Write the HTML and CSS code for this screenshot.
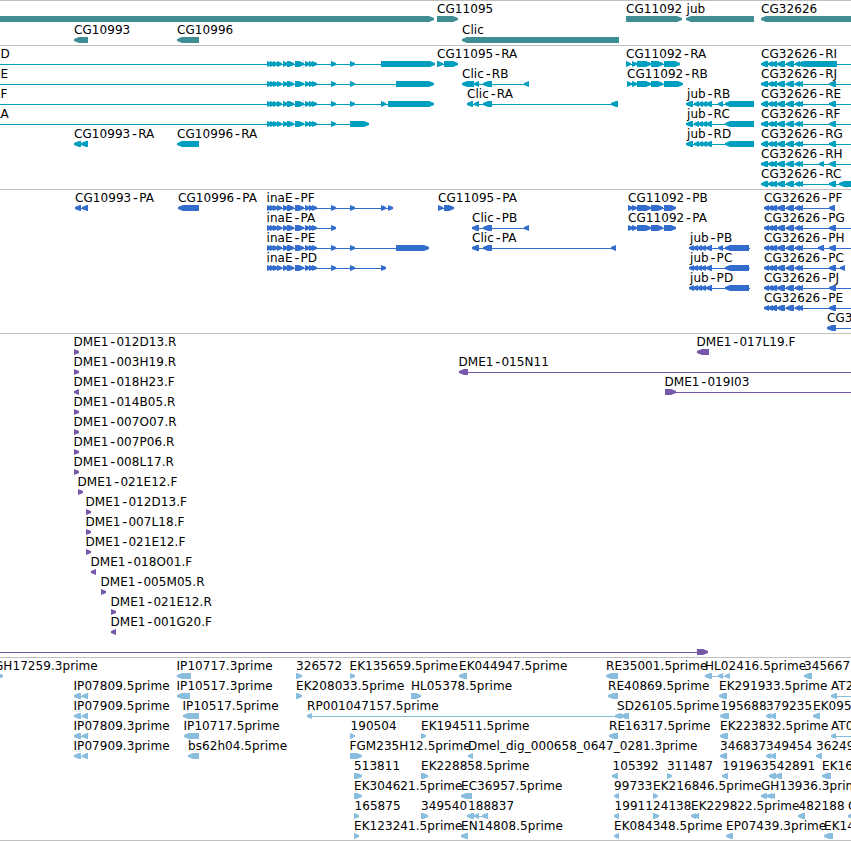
FILE: index.html
```html
<!DOCTYPE html>
<html lang="en">
<head>
    <meta charset="UTF-8">
    <title>Genome Browser</title>
    <link rel="stylesheet" href="styles.css">
</head>
<body>
    <div class="browser">
        <svg class="track genes" id="genes"></svg>
        <svg class="track transcripts" id="transcripts"></svg>
        <svg class="track proteins" id="proteins"></svg>
        <svg class="track bacs" id="bacs"></svg>
        <svg class="track ests" id="ests"></svg>
    </div>
    <script src="tracks.js"></script>
</body>
</html>
```
FILE: styles.css
```css
* {
    margin: 0;
    padding: 0;
    box-sizing: border-box;
}
body {
    background-color: #ffffff;
    overflow: hidden;
}
.browser {
    width: 851px;
    display: flex;
    flex-direction: column;
    border-bottom: 1px solid #bfbfbf;
}
.track {
    display: block;
    width: 100%;
    border-top: 1px solid #bfbfbf;
    overflow: hidden;
}
.track text {
    font-family: "DejaVu Sans", sans-serif;
    font-size: 12px;
    letter-spacing: 0.06px;
    fill: #000000;
    white-space: pre;
}
/* wider hyphen */
.track .dash {
    font-family: "DejaVu Sans Mono", monospace;
    font-size: 14px;
    letter-spacing: -0.6px;
    baseline-shift: -1px;
}
.genes {
    height: 45px;
    fill: #3f8e93;
}
.transcripts {
    height: 144px;
    fill: #009ebf;
}
.proteins {
    height: 144px;
    fill: #326ccc;
}
.bacs {
    height: 324px;
    fill: #7558a8;
}
.ests {
    height: 183px;
    fill: #88bddd;
}
```
FILE: tracks.js
```js
// feature: [row, label, label x, direction, "start-end ..." blocks, line start, line end]
const inaE = '267-272 270-275 273-278 277-282 283-288 287-294 295-304 305-310 309-314 312-317 331-336';
const cg11092 = '632-637 637-651 651-663';
const cg32626 = '768-773 771-777 777-785 786-794 795-800 798-803';
const jubR = '686-693 694-699 698-703 702-707 706-712';
const jubP = '689-694 693-698 697-702 701-706 706-712';

const genes = [
    [0, '', 0, '>', '0-434'],
    [0, 'CG11095', 437, '>', '437-458'],
    [0, 'CG11092', 626, '>', '626-682'],
    [0, 'jub', 686.5, '<', '686-754'],
    [0, 'CG32626', 761, '<', '761-860'],
    [1, 'CG10993', 74, '<', '74-88'],
    [1, 'CG10996', 177, '<', '177-199'],
    [1, 'Clic', 462, '<', '462-619']
];

const transcripts = [
    [0, 'RD', -8, '>', inaE + ' 350-355 381-435', 0],
    [1, 'RE', -8, '>', inaE + ' 350-355 396-434', 0],
    [2, 'RF', -8, '>', inaE + ' 350-355 381-386 388-434', 0],
    [3, 'RA', -7.5, '>', inaE + ' 350-369', 0],
    [4, 'CG10993-RA', 74, '<', '74-81 81-88'],
    [4, 'CG10996-RA', 177, '<', '177-199'],
    [0, 'CG11095-RA', 437, '>', '437-443 444-458'],
    [1, 'Clic-RB', 462, '<', '462-474 474-479 483-492 524-529'],
    [2, 'Clic-RA', 467, '<', '467-473 474-479 483-492 611-618'],
    [0, 'CG11092-RA', 626, '>', '626-631 ' + cg11092 + ' 664-680'],
    [1, 'CG11092-RB', 627, '>', '627-632 ' + cg11092 + ' 664-683'],
    [2, 'jub-RB', 687, '<', jubR + ' 718-723 725-754'],
    [3, 'jub-RC', 687, '<', jubR + ' 725-754'],
    [4, 'jub-RD', 687, '<', jubR + ' 725-754'],
    [0, 'CG32626-RI', 761, '<', '761-768 ' + cg32626 + ' 799-837', 761, 851],
    [1, 'CG32626-RJ', 761, '<', '761-768 ' + cg32626 + ' 829-836', 761, 851],
    [2, 'CG32626-RE', 761, '<', '761-768 ' + cg32626 + ' 829-836', 761, 851],
    [3, 'CG32626-RF', 761, '<', '761-768 ' + cg32626 + ' 829-836', 761, 851],
    [4, 'CG32626-RG', 761, '<', '761-768 ' + cg32626 + ' 829-836', 761, 851],
    [5, 'CG32626-RH', 761, '<', '761-768 ' + cg32626 + ' 819-824 829-836', 761, 851],
    [6, 'CG32626-RC', 761, '<', '761-768 ' + cg32626 + ' 829-836 839-856']
];

const proteins = [
    [0, 'CG10993-PA', 75, '<', '75-81 82-88'],
    [0, 'CG10996-PA', 178, '<', '178-199'],
    [0, 'inaE-PF', 266.5, '>', inaE + ' 350-355 381-386 388-393'],
    [1, 'inaE-PA', 266.5, '>', inaE],
    [2, 'inaE-PE', 266.5, '>', inaE + ' 350-355 396-429'],
    [3, 'inaE-PD', 266.5, '>', inaE + ' 350-355 381-386'],
    [0, 'CG11095-PA', 438, '>', '438-443 444-454'],
    [1, 'Clic-PB', 472, '<', '472-479 483-492 524-529'],
    [2, 'Clic-PA', 472, '<', '472-479 483-492 611-616'],
    [0, 'CG11092-PB', 628, '>', '628-633 ' + cg11092 + ' 664-676'],
    [1, 'CG11092-PA', 628, '>', '628-633 ' + cg11092 + ' 664-676'],
    [2, 'jub-PB', 690, '<', jubP + ' 718-723 725-749', 689, 750],
    [3, 'jub-PC', 690, '<', jubP + ' 725-749', 689, 750],
    [4, 'jub-PD', 690, '<', jubP + ' 725-749', 689, 750],
    [0, 'CG32626-PF', 764, '<', '764-769 ' + cg32626 + ' 829-835'],
    [1, 'CG32626-PG', 764, '<', '764-769 ' + cg32626 + ' 829-836', 764, 851],
    [2, 'CG32626-PH', 764, '<', '764-769 ' + cg32626 + ' 818-824 829-836', 764, 851],
    [3, 'CG32626-PC', 764, '<', '764-769 ' + cg32626 + ' 829-836 840-845'],
    [4, 'CG32626-PJ', 764, '<', '764-769 ' + cg32626 + ' 829-836', 764, 851],
    [5, 'CG32626-PE', 764, '<', '764-769 ' + cg32626 + ' 829-836', 764, 851],
    [6, 'CG3', 827, '<', '827-836', 827, 851]
];

const bacs = [
    [0, 'DME1-012D13.R', 73.5, '>', '74-79'],
    [1, 'DME1-003H19.R', 73.5, '>', '74-79'],
    [2, 'DME1-018H23.F', 73.5, '<', '74-79'],
    [3, 'DME1-014B05.R', 73.5, '>', '74-79'],
    [4, 'DME1-007O07.R', 73.5, '>', '74-79'],
    [5, 'DME1-007P06.R', 73.5, '>', '74-79'],
    [6, 'DME1-008L17.R', 73.5, '>', '74-79'],
    [7, 'DME1-021E12.F', 77.5, '>', '78-83'],
    [8, 'DME1-012D13.F', 85.5, '>', '86-91'],
    [9, 'DME1-007L18.F', 85.5, '>', '86-91'],
    [10, 'DME1-021E12.F', 85.5, '>', '86-91'],
    [11, 'DME1-018O01.F', 90.5, '<', '91-96'],
    [12, 'DME1-005M05.R', 100.5, '>', '101-106'],
    [13, 'DME1-021E12.R', 110.5, '>', '111-116'],
    [14, 'DME1-001G20.F', 110.5, '<', '111-116'],
    [15, '', 0, '>', '697-708', 0],
    [0, 'DME1-017L19.F', 696.5, '<', '697-709'],
    [1, 'DME1-015N11', 458.5, '<', '459-468', 459, 851],
    [2, 'DME1-019I03', 664.5, '>', '665-676', 665, 851]
];

const ests = [
    [0, 'GH17259.3prime', -6, '>', '-2-3'],
    [0, 'IP10717.3prime', 176.5, '<', '177-191'],
    [0, '326572', 296, '>', '296-302'],
    [0, 'EK135659.5prime', 349.5, '>', '350-355'],
    [0, 'EK044947.5prime', 459, '<', '459-467'],
    [0, 'RE35001.5prime', 606, '<', '606-618'],
    [0, 'HL02416.5prime', 705, '<', '705-712 718-723 725-730'],
    [0, '345667', 804, '<', '804-812'],

    [1, 'IP07809.5prime', 73.5, '<', '74-81 82-88'],
    [1, 'IP10517.3prime', 176.5, '<', '177-190'],
    [1, 'EK208033.5prime', 296, '>', '296-302'],
    [1, 'HL05378.5prime', 411, '>', '411-421'],
    [1, 'RE40869.5prime', 608, '<', '608-618'],
    [1, 'EK291933.5prime', 719, '<', '719-727'],
    [1, 'AT2', 831, '<', '831-837', 831, 851],

    [2, 'IP07909.5prime', 73.5, '<', '74-81 82-88'],
    [2, 'IP10517.5prime', 182.5, '<', '183-199'],
    [2, 'RP001047157.5prime', 307, '<', '307-312 615-620'],
    [2, 'SD26105.5prime', 617, '<', '617-622 621-629'],
    [2, '195688', 720.5, '<', '720-729'],
    [2, '379235', 766, '<', '766-771 770-776'],
    [2, 'EK095', 813, '<', '813-820'],

    [3, 'IP07809.3prime', 73.5, '<', '74-81 82-88'],
    [3, 'IP10717.5prime', 183.5, '<', '184-199'],
    [3, '190504', 350.5, '>', '350-355'],
    [3, 'EK194511.5prime', 421, '>', '421-426'],
    [3, 'RE16317.5prime', 609, '<', '609-618'],
    [3, 'EK223832.5prime', 720, '<', '720-728'],
    [3, 'AT0', 831, '<', '831-836', 831, 851],

    [4, 'IP07909.3prime', 73.5, '<', '74-81 82-88'],
    [4, 'bs62h04.5prime', 188, '<', '188-199'],
    [4, 'FGM235H12.5prime', 349.5, '>', '350-362'],
    [4, 'Dmel_dig_000658_0647_0281.3prime', 468, '<', '468-473'],
    [4, '346837', 720, '<', '720-727'],
    [4, '349454', 766, '<', '766-771 770-776'],
    [4, '36249', 816, '<', '816-822'],

    [5, '513811', 354, '>', '354-362'],
    [5, 'EK228858.5prime', 421, '>', '421-428'],
    [5, '105392', 612.5, '<', '612-618'],
    [5, '311487', 667, '>', '667-672'],
    [5, '191963', 722.5, '<', '722-728'],
    [5, '542891', 769, '<', '769-776 775-782'],
    [5, 'EK16', 822, '<', '822-831'],

    [6, 'EK304621.5prime', 354, '>', '354-362'],
    [6, 'EC36957.5prime', 461, '<', '461-472'],
    [6, '99733', 614, '<', '614-619'],
    [6, 'EK216846.5prime', 653, '>', '653-658'],
    [6, 'GH13936.3prime', 761, '<', '761-767 767-772 770-775'],

    [7, '165875', 354.5, '>', '354-359'],
    [7, '349540', 421, '>', '421-428'],
    [7, '188837', 468, '<', '467-474 474-479 482-488'],
    [7, '19911', 614.5, '<', '614-619'],
    [7, '24138', 653, '>', '653-659'],
    [7, 'EK229822.5prime', 691, '<', '691-696 694-699'],
    [7, '482188', 798.5, '<', '798-805'],
    [7, 'C', 848, '<', '848-855'],

    [8, 'EK123241.5prime', 354, '>', '354-359'],
    [8, 'EN14808.5prime', 461, '<', '461-468'],
    [8, 'EK084348.5prime', 614, '<', '614-619'],
    [8, 'EP07439.3prime', 726, '<', '726-733'],
    [8, 'EK14', 824, '<', '824-833']
];

// block with a pointed end, 6px high
function block(a, b, dir, y) {
    const head = Math.min(5, b - a);
    const tip = dir === '>' ? b : a;
    const back = dir === '>' ? a : b;
    const s = dir === '>' ? -1 : 1;
    const neck = tip + s * head;
    const mid = tip + s * head / 2;
    return `<path d="M${back} ${y}H${neck}L${mid} ${y + 1}L${tip} ${y + 2}V${y + 4}L${mid} ${y + 5}L${neck} ${y + 6}H${back}Z"/>`;
}

function drawTrack(id, features, rowHeight) {
    let out = '';
    features.forEach(([row, label, x, dir, blocks, from, to]) => {
        const y = 15 + row * rowHeight;
        const parts = blocks.split(' ').map(p => p.match(/^(-?\d+)-(\d+)$/).slice(1).map(Number));
        const start = from ?? parts[0][0];
        const end = to ?? parts[parts.length - 1][1];

        out += `<rect x="${start}" y="${y + 3}" width="${end - start}" height="1"/>`;
        parts.forEach(([a, b]) => out += block(a, b, dir, y));
        if (label) {
            out += `<text x="${x}" y="${y - 3}">${label.replace('-', '<tspan class="dash">-</tspan>')}</text>`;
        }
    });
    document.getElementById(id).innerHTML = out;
}

drawTrack('genes', genes, 21);
drawTrack('transcripts', transcripts, 20);
drawTrack('proteins', proteins, 20);
drawTrack('bacs', bacs, 20);
drawTrack('ests', ests, 20);
```
